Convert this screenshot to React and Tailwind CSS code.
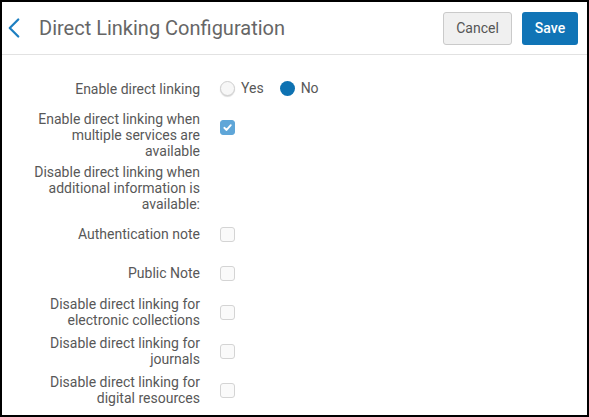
import { ChevronLeft } from "lucide-react";

function Box({ checked }) {
  return (
    <span
      className={
        "flex h-[15px] w-[15px] items-center justify-center rounded-[3px] border " +
        (checked ? "border-[#5fa6d8] bg-[#5fa6d8]" : "border-[#d4d4d4] bg-[#fafafa]")
      }
    >
      {checked && (
        <svg width="11" height="11" viewBox="0 0 12 12" fill="none">
          <path d="M2.5 6.3 L5 8.7 L9.6 3.4" stroke="white" strokeWidth="2" strokeLinecap="round" strokeLinejoin="round" />
        </svg>
      )}
    </span>
  );
}

function Row({ label, children, className = "", center = true }) {
  return (
    <div className={"flex " + (center ? "items-center " : "items-start ") + className}>
      <div className="ml-[30px] w-[168px] text-right leading-4">{label}</div>
      <div className="ml-[20px] flex items-center">{children}</div>
    </div>
  );
}

export default function App() {
  return (
    <div
      className="h-[417px] w-[589px] overflow-hidden border-y-2 border-l-2 border-r-2 border-black bg-white text-[14px] text-[#585858]"
      style={{ fontFamily: "Roboto, 'Liberation Sans', sans-serif" }}
    >
      {/* header */}
      <div className="flex h-[53px] items-center border-b border-[#e2e2e2] pr-[9px]">
        <ChevronLeft className="-ml-[5px] text-[#1d7fc1]" size={34} strokeWidth={1.6} />
        <h1 className="ml-[8px] text-[20px] text-[#666]">Direct Linking Configuration</h1>
        <div className="ml-auto flex gap-[10px]">
          <button className="h-[33px] w-[69px] rounded-[3px] border border-[#cacaca] bg-[#f0f0f0] text-[#555]">
            Cancel
          </button>
          <button className="h-[33px] w-[56px] rounded-[3px] bg-[#1074b6] font-medium text-white">
            Save
          </button>
        </div>
      </div>

      <Row label="Enable direct linking" className="mt-[23px]">
        <span className="h-[15px] w-[15px] rounded-full border border-[#cfcfcf] bg-[#f7f7f7] shadow-[0_1px_1px_rgba(0,0,0,0.15)]" />
        <span className="ml-[6px]">Yes</span>
        <span className="ml-[16px] h-[15px] w-[15px] rounded-full bg-[#0e72b2]" />
        <span className="ml-[6px]">No</span>
      </Row>

      <Row label="Enable direct linking when multiple services are available" className="mt-[12px]" center={false}>
        <span className="mt-[9px]">
          <Box checked />
        </span>
      </Row>

      <Row label="Disable direct linking when additional information is available:" className="mt-[5px]" center={false} />

      <Row label="Authentication note" className="mt-[14px]">
        <Box />
      </Row>
      <Row label="Public Note" className="mt-[23px]">
        <Box />
      </Row>
      <Row label="Disable direct linking for electronic collections" className="mt-[15px]">
        <Box />
      </Row>
      <Row label="Disable direct linking for journals" className="mt-[7px]">
        <Box />
      </Row>
      <Row label="Disable direct linking for digital resources" className="mt-[7px]">
        <Box />
      </Row>
    </div>
  );
}
